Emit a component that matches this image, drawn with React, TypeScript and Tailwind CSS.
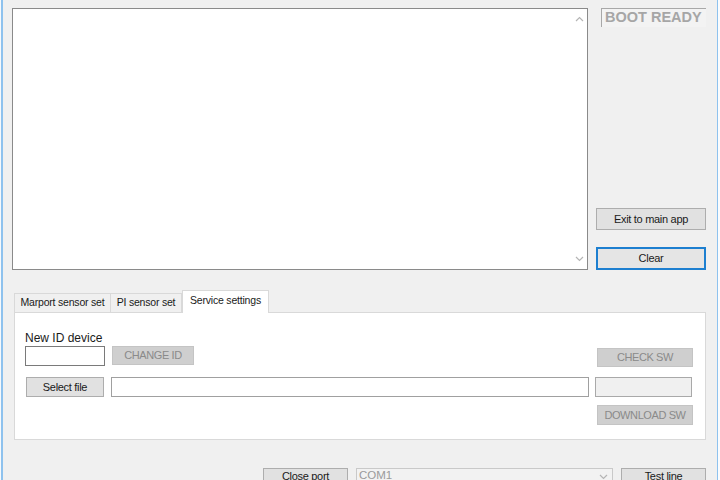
import React from "react";

const font = { fontFamily: '"Liberation Sans", Arial, sans-serif' };

function Btn({ children, className = "" }: { children: React.ReactNode; className?: string }) {
  return (
    <div
      className={
        "flex shrink-0 items-center justify-center border border-[#adadad] bg-[#e1e1e1] text-[11px] tracking-[-0.3px] text-[#1a1a1a] " +
        className
      }
    >
      {children}
    </div>
  );
}

function DisBtn({ children, className = "" }: { children: React.ReactNode; className?: string }) {
  return (
    <div
      className={
        "flex shrink-0 items-center justify-center border border-[#c4c4c4] bg-[#cfcfcf] text-[11px] tracking-[-0.4px] text-[#8a8a8a] " +
        className
      }
    >
      {children}
    </div>
  );
}

function Chevron({ up }: { up?: boolean }) {
  return (
    <svg width="9" height="6" viewBox="0 0 9 6">
      <path
        d={up ? "M1 5 L4.5 1.5 L8 5" : "M1 1 L4.5 4.5 L8 1"}
        fill="none"
        stroke="#b5b5b5"
        strokeWidth="1.2"
      />
    </svg>
  );
}

export default function App() {
  return (
    <div className="flex h-[480px] w-[720px] overflow-hidden bg-[#f0f0f0]" style={font}>
      <div className="w-[1px] shrink-0 bg-[#f6f9fc]" />
      <div className="w-[2px] shrink-0 bg-[#8ec2ee]" />
      <div className="flex flex-1 flex-col">
        {/* top row */}
        <div className="mt-[8px] flex h-[262px] shrink-0">
          <div className="ml-[9px] flex h-full w-[576px] border border-[#8a8a8a] bg-white">
            <div className="flex-1" />
            <div className="flex w-[16px] flex-col items-center justify-between bg-white py-[7px]">
              <Chevron up />
              <Chevron />
            </div>
          </div>
          <div className="ml-[8px] flex w-[110px] flex-col">
            <div className="ml-[5px] flex h-[19px] shrink-0 items-center border-l border-t border-[#a8a8a8] bg-[#f3f3f3] pl-[3px] text-[14.5px] font-bold text-[#a6a6a6]">
              BOOT READY
            </div>
            <div className="flex-1" />
            <Btn className="h-[22px]">Exit to main app</Btn>
            <div className="h-[17px] shrink-0" />
            <div className="flex h-[23px] shrink-0 items-center justify-center border-2 border-[#1d7fd0] bg-[#e5e5e5] text-[11px] tracking-[-0.3px] text-[#1a1a1a]">
              Clear
            </div>
          </div>
        </div>

        {/* tabs */}
        <div className="ml-[11px] mt-[20px] flex h-[22px] shrink-0 items-end text-[10.5px] tracking-[-0.2px] text-[#1a1a1a]">
          <div className="flex h-[19px] w-[97px] items-center justify-center border border-b-0 border-[#d9d9d9] bg-[#f0f0f0]">
            Marport sensor set
          </div>
          <div className="flex h-[19px] w-[71px] items-center justify-center border border-b-0 border-l-0 border-[#d9d9d9] bg-[#f0f0f0]">
            PI sensor set
          </div>
          <div className="relative z-10 -mb-[1px] flex h-[23px] w-[87px] items-center justify-center border border-b-0 border-[#d9d9d9] bg-white pb-[2px]">
            Service settings
          </div>
        </div>
        <div className="ml-[11px] flex h-[128px] w-[692px] shrink-0 flex-col border border-[#d9d9d9] bg-white">
          <div className="ml-[10px] mt-[18px] text-[12px] leading-[14px] text-[#1a1a1a]">New ID device</div>
          <div className="mt-[1px] flex items-start">
            <div className="ml-[10px] h-[20px] w-[80px] border border-[#7a7a7a] bg-white" />
            <DisBtn className="ml-[7px] h-[19px] w-[82px]">CHANGE ID</DisBtn>
            <div className="flex-1" />
            <DisBtn className="mr-[12px] mt-[2px] h-[19px] w-[96px]">CHECK SW</DisBtn>
          </div>
          <div className="mt-[10px] flex items-center">
            <Btn className="ml-[11px] h-[20px] w-[78px]">Select file</Btn>
            <div className="ml-[7px] h-[20px] w-[478px] border border-[#a0a0a0] bg-white" />
            <div className="ml-[6px] h-[20px] w-[97px] border border-[#a9a9a9] bg-[#f0f0f0]" />
          </div>
          <div className="mt-[8px] flex">
            <div className="flex-1" />
            <DisBtn className="mr-[12px] h-[20px] w-[96px]">DOWNLOAD SW</DisBtn>
          </div>
        </div>

        {/* bottom row */}
        <div className="mt-[28px] flex shrink-0 items-start">
          <Btn className="ml-[260px] h-[22px] w-[85px] items-start pt-[0px] leading-[14px]">Close port</Btn>
          <div className="ml-[8px] flex h-[22px] w-[257px] shrink-0 items-start border border-[#c9c9c9] bg-[#f2f2f2] pl-[2px] text-[11.5px] leading-[13px] text-[#9a9a9a]">
            <span className="flex-1">COM1</span>
            <div className="mr-[4px] mt-[5px]">
              <Chevron />
            </div>
          </div>
          <Btn className="ml-[8px] h-[22px] w-[85px] items-start pt-[0px] leading-[14px]">Test line</Btn>
        </div>
      </div>
      <div className="w-[1px] shrink-0 bg-[#8ec2ee]" />
      <div className="w-[2px] shrink-0 bg-[#fafcfe]" />
    </div>
  );
}
